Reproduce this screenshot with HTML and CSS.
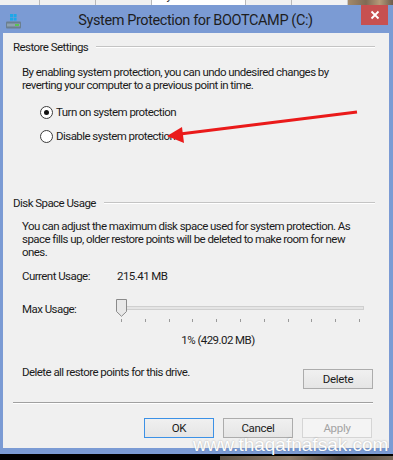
FILE: index.html
```html
<!DOCTYPE html>
<html>
<head>
<meta charset="utf-8">
<link rel="stylesheet" href="styles.css">
</head>
<body>
<div class="screen">
  <div class="backdrop-tabs">
    <div class="tab t1"><span>Name</span></div>
    <div class="tab t2"><span>Hardware</span></div>
    <div class="tab t3"><span>Advanced</span></div>
    <div class="tab t4 active"><span>System Protection</span></div>
    <div class="tab t5"><span>Remote</span></div>
    <div class="tab-fill"></div>
    <div class="photo-top"></div>
  </div>

  <div class="window">
    <div class="titlebar">
      <svg class="app-icon" width="17" height="17" viewBox="0 0 17 17">
        <rect x="5" y="1" width="3" height="3" fill="#1ea7e8"/>
        <rect x="8.6" y="1" width="3" height="3" fill="#1ea7e8"/>
        <rect x="5" y="4.6" width="3" height="3" fill="#1ea7e8"/>
        <rect x="8.6" y="4.6" width="3" height="3" fill="#1ea7e8"/>
        <path d="M1 9.5 Q1 8.5 2 8.5 L15 8.5 Q16 8.5 16 9.5 L16 14.5 Q16 15.5 15 15.5 L2 15.5 Q1 15.5 1 14.5 Z" fill="#6b7f8f"/>
        <rect x="2" y="10.5" width="13" height="3" fill="#8fa2b0"/>
        <rect x="10" y="11.2" width="4" height="1.6" fill="#4ccf3a"/>
      </svg>
      <div class="title">System Protection for BOOTCAMP (C:)</div>
      <div class="close">
        <svg width="10" height="10" viewBox="0 0 10 10"><path d="M1.5 1.5 L8.5 8.5 M8.5 1.5 L1.5 8.5" stroke="#fff" stroke-width="1.8"/></svg>
      </div>
    </div>

    <div class="client">
      <div class="legend"><span>Restore Settings</span><div class="rule"></div></div>
      <p class="para p1">By enabling system protection, you can undo undesired changes by<br>reverting your computer to a previous point in time.</p>
      <div class="radio r1"><span class="dot checked"></span><span>Turn on system protection</span></div>
      <div class="radio r2"><span class="dot"></span><span>Disable system protection</span></div>

      <div class="legend l2"><span>Disk Space Usage</span><div class="rule"></div></div>
      <p class="para p2">You can adjust the maximum disk space used for system protection. As<br>space fills up, older restore points will be deleted to make room for new<br>ones.</p>

      <div class="kv"><span class="k">Current Usage:</span><span class="v">215.41 MB</span></div>

      <div class="slider-row">
        <span class="k">Max Usage:</span>
        <div class="slider">
          <div class="track"></div>
          <svg class="thumb" width="11" height="18" viewBox="0 0 11 18">
            <path d="M0.5 0.5 H10.5 V12.5 L5.5 17.3 L0.5 12.5 Z" fill="#e8e8e8" stroke="#8a8a8a"/>
          </svg>
          <div class="ticks">
            <i></i><i></i><i></i><i></i><i></i><i></i><i></i><i></i><i></i><i></i><i></i>
          </div>
        </div>
      </div>
      <div class="percent">1% (429.02 MB)</div>

      <div class="delete-row">
        <span>Delete all restore points for this drive.</span>
        <button class="btn">Delete</button>
      </div>

      <div class="sep"></div>

      <div class="actions">
        <button class="btn focus">OK</button>
        <button class="btn">Cancel</button>
        <button class="btn disabled">Apply</button>
      </div>
    </div>
    <div class="frame-bottom"></div>
  </div>
  <div class="taskbar"><div class="photo-bottom"></div></div>

  <svg class="arrow" width="393" height="460" viewBox="0 0 393 460">
    <line x1="357" y1="112" x2="180" y2="134" stroke="#ea1a1a" stroke-width="3"/>
    <polygon points="167,136 182,127 184,143" fill="#ea1a1a"/>
  </svg>
  <div class="watermark">www.thaqafnafsak.com</div>
</div>
</body>
</html>
```

FILE: styles.css
```css
html, body {
  margin: 0;
  padding: 0;
  background: #000;
}
.screen {
  position: relative;
  width: 393px;
  height: 460px;
  overflow: hidden;
  font-family: Roboto, "Noto Sans", sans-serif;
  font-size: 11.5px;
  letter-spacing: -0.55px;
  color: #1b1b1b;
}
.backdrop-tabs {
  display: flex;
  height: 5px;
  overflow: hidden;
  background: #f2f2f2;
}
.tab {
  height: 5px;
  border-right: 1px solid #b9b9b9;
  background: #f0f0f0;
  overflow: hidden;
  font-size: 12px;
  color: #333;
  box-sizing: border-box;
  padding-left: 8px;
}
.tab span {
  display: block;
  line-height: 12px;
  margin-top: -11px;
  white-space: nowrap;
}
.tab.active { background: #fff; }
.t1 { width: 40px; }
.t2 { width: 56px; }
.t3 { width: 56px; }
.t4 { width: 94px; }
.t5 { width: 46px; }
.tab-fill { width: 55px; background: #f2f2f2; border-right: 1px solid #c9c9c9; }
.photo-top {
  flex: 1;
  background: linear-gradient(90deg, #a38a6a, #7f6a55 40%, #b59a78 70%, #6d5c4c);
}
.window {
  background: #7b9bd4;
  padding: 0 4px 0 3px;
}
.titlebar {
  height: 28px;
  display: flex;
  align-items: center;
  position: relative;
}
.app-icon {
  margin-left: 2px;
  margin-top: 4px;
}
.title {
  flex: 1;
  text-align: center;
  font-size: 14.5px;
  letter-spacing: -0.4px;
  color: #1e1e1e;
  margin-top: 3px;
  padding-right: 20px;
}
.close {
  position: absolute;
  right: 1px;
  top: 0;
  width: 27px;
  height: 20px;
  background: #c75050;
  display: flex;
  align-items: center;
  justify-content: center;
}
.client {
  background: #f0f0f0;
  height: 415px;
  box-sizing: border-box;
  padding: 7px 14px 0 10px;
  display: flex;
  flex-direction: column;
}
.legend {
  display: flex;
  align-items: center;
  height: 14px;
  line-height: 14px;
}
.legend .rule {
  flex: 1;
  margin-left: 8px;
  height: 0;
  border-top: 1px solid #c4c4c4;
  border-bottom: 1px solid #fff;
}
.l2 { margin-top: 52px; }
.para {
  margin: 12px 0 0 9px;
  line-height: 13px;
  white-space: nowrap;
}
.p1 { margin-top: 12px; }
.p2 { margin-top: 10px; }
.radio {
  display: flex;
  align-items: center;
  height: 16px;
  margin-left: 27px;
}
.r1 { margin-top: 12px; }
.r2 { margin-top: 8px; }
.dot {
  width: 11px;
  height: 11px;
  border: 1px solid #3c3c3c;
  border-radius: 50%;
  background: #fff;
  margin-right: 3px;
  display: flex;
  align-items: center;
  justify-content: center;
}
.dot.checked::after {
  content: "";
  width: 5px;
  height: 5px;
  border-radius: 50%;
  background: #111;
}
.kv {
  display: flex;
  margin: 10px 0 0 9px;
  line-height: 14px;
}
.k { width: 95px; flex: none; }
.slider-row {
  display: flex;
  margin: 16px 0 0 9px;
}
.slider-row .k { margin-top: 3px; line-height: 14px; }
.slider {
  position: relative;
  width: 250px;
  height: 26px;
  margin-left: -1px;
}
.track {
  position: absolute;
  left: 4px;
  right: 2px;
  top: 7px;
  height: 2px;
  background: #e4e4e4;
  border: 1px solid #cfcfcf;
}
.thumb {
  position: absolute;
  left: 0;
  top: 0;
}
.ticks {
  position: absolute;
  left: 5px;
  width: 239px;
  top: 20px;
  display: flex;
  justify-content: space-between;
}
.ticks i {
  width: 1px;
  height: 3px;
  background: #9a9a9a;
}
.percent {
  margin-top: 8px;
  text-align: center;
  padding-left: 48px;
  line-height: 14px;
}
.delete-row {
  display: flex;
  justify-content: space-between;
  align-items: flex-start;
  margin: 18px 2px 0 9px;
  line-height: 14px;
}
.delete-row .btn { margin-top: 4px; }
.btn {
  width: 70px;
  height: 20px;
  font-family: Roboto, "Noto Sans", sans-serif;
  font-size: 11.5px;
  letter-spacing: -0.3px;
  color: #1b1b1b;
  background: linear-gradient(#f0f0f0, #e5e5e5);
  border: 1px solid #acacac;
  padding: 0;
  box-sizing: border-box;
}
.btn.focus { border-color: #3c91e6; }
.btn.disabled {
  color: #a3a3a3;
  border-color: #d5d5d5;
  background: #f4f4f4;
}
.sep {
  margin: 13px 2px 0 0;
  border-top: 1px solid #a0a0a0;
  border-bottom: 1px solid #fff;
}
.actions {
  display: flex;
  justify-content: flex-end;
  gap: 9px;
  margin: 14px 3px 0 0;
}
.frame-bottom { height: 6px; }
.taskbar {
  height: 6px;
  background: #000;
  position: relative;
}
.photo-bottom {
  position: absolute;
  left: 220px;
  right: 0;
  top: 2px;
  bottom: 0;
  background: linear-gradient(90deg, #5e5246, #8d7b69 40%, #4b4038 70%, #7a6b5c);
}
.arrow {
  position: absolute;
  left: 0;
  top: 0;
  pointer-events: none;
}
.watermark {
  position: absolute;
  left: 193px;
  top: 434px;
  font-family: "Liberation Sans", Arial, sans-serif;
  font-size: 19px;
  line-height: 22px;
  letter-spacing: 0;
  color: #fff;
  text-shadow: 0 0 2px rgba(0,0,0,0.3);
}
```
